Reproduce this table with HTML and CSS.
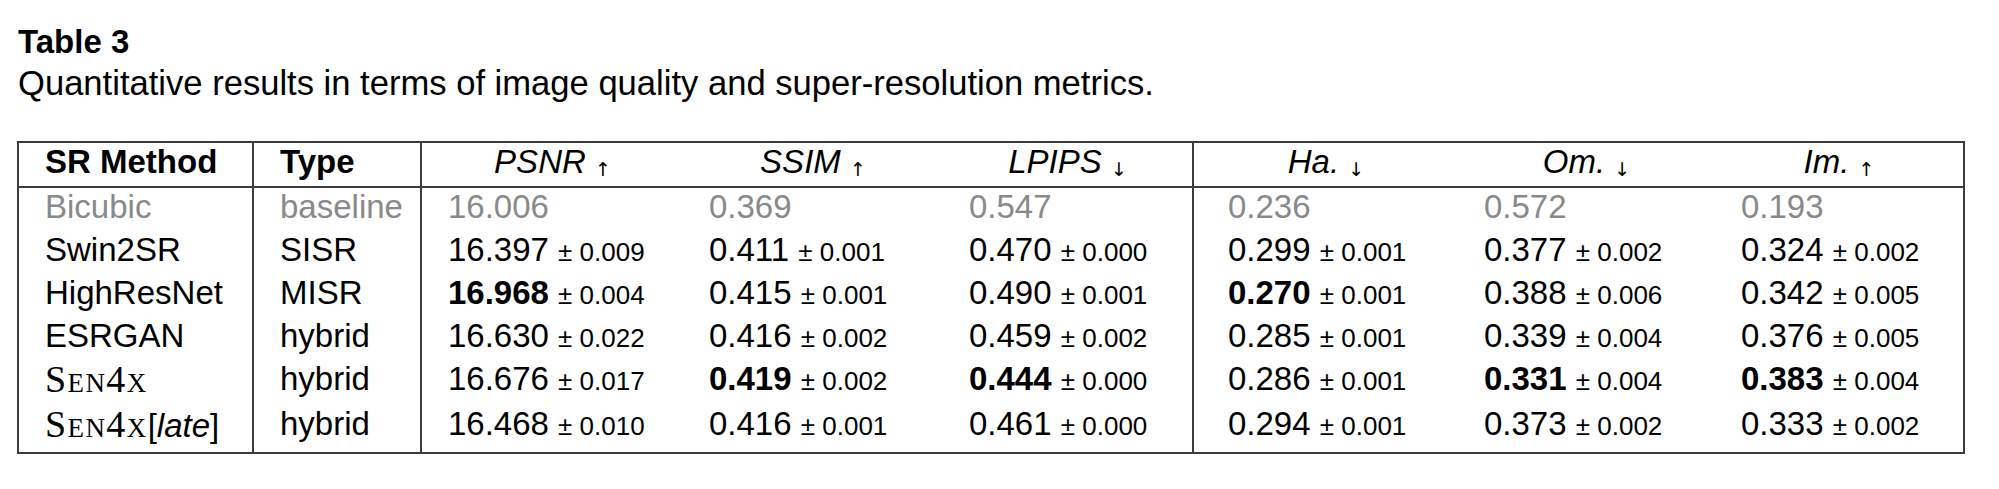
FILE: index.html
```html
<!DOCTYPE html>
<html lang="en">
<head>
<meta charset="utf-8">
<title>Table 3</title>
<link rel="stylesheet" href="styles.css">
</head>
<body>
<div class="page">
  <div class="title">Table 3</div>
  <div class="caption">Quantitative results in terms of image quality and super-resolution metrics.</div>
  <table class="results">
    <colgroup>
      <col class="c-method">
      <col class="c-type">
      <col class="c-psnr">
      <col class="c-ssim">
      <col class="c-lpips">
      <col class="c-ha">
      <col class="c-om">
      <col class="c-im">
    </colgroup>
    <thead>
      <tr>
        <th class="lead">SR Method</th>
        <th class="lead sep">Type</th>
        <th class="metric sep"><i>PSNR</i> <span class="arr">↑</span></th>
        <th class="metric"><i>SSIM</i> <span class="arr">↑</span></th>
        <th class="metric"><i>LPIPS</i> <span class="arr">↓</span></th>
        <th class="metric sep"><i>Ha.</i> <span class="arr">↓</span></th>
        <th class="metric"><i>Om.</i> <span class="arr">↓</span></th>
        <th class="metric"><i>Im.</i> <span class="arr">↑</span></th>
      </tr>
    </thead>
    <tbody>
      <tr class="base">
        <td>Bicubic</td>
        <td class="sep">baseline</td>
        <td class="sep">16.006</td>
        <td>0.369</td>
        <td>0.547</td>
        <td class="sep wide">0.236</td>
        <td>0.572</td>
        <td>0.193</td>
      </tr>
      <tr>
        <td>Swin2SR</td>
        <td class="sep">SISR</td>
        <td class="sep">16.397 <span class="pm">± 0.009</span></td>
        <td>0.411 <span class="pm">± 0.001</span></td>
        <td>0.470 <span class="pm">± 0.000</span></td>
        <td class="sep wide">0.299 <span class="pm">± 0.001</span></td>
        <td>0.377 <span class="pm">± 0.002</span></td>
        <td>0.324 <span class="pm">± 0.002</span></td>
      </tr>
      <tr>
        <td>HighResNet</td>
        <td class="sep">MISR</td>
        <td class="sep"><b>16.968</b> <span class="pm">± 0.004</span></td>
        <td>0.415 <span class="pm">± 0.001</span></td>
        <td>0.490 <span class="pm">± 0.001</span></td>
        <td class="sep wide"><b>0.270</b> <span class="pm">± 0.001</span></td>
        <td>0.388 <span class="pm">± 0.006</span></td>
        <td>0.342 <span class="pm">± 0.005</span></td>
      </tr>
      <tr>
        <td>ESRGAN</td>
        <td class="sep">hybrid</td>
        <td class="sep">16.630 <span class="pm">± 0.022</span></td>
        <td>0.416 <span class="pm">± 0.002</span></td>
        <td>0.459 <span class="pm">± 0.002</span></td>
        <td class="sep wide">0.285 <span class="pm">± 0.001</span></td>
        <td>0.339 <span class="pm">± 0.004</span></td>
        <td>0.376 <span class="pm">± 0.005</span></td>
      </tr>
      <tr>
        <td><span class="sc">Sen4x</span></td>
        <td class="sep">hybrid</td>
        <td class="sep">16.676 <span class="pm">± 0.017</span></td>
        <td><b>0.419</b> <span class="pm">± 0.002</span></td>
        <td><b>0.444</b> <span class="pm">± 0.000</span></td>
        <td class="sep wide">0.286 <span class="pm">± 0.001</span></td>
        <td><b>0.331</b> <span class="pm">± 0.004</span></td>
        <td><b>0.383</b> <span class="pm">± 0.004</span></td>
      </tr>
      <tr>
        <td><span class="sc">Sen4x</span>[<i>late</i>]</td>
        <td class="sep">hybrid</td>
        <td class="sep">16.468 <span class="pm">± 0.010</span></td>
        <td>0.416 <span class="pm">± 0.001</span></td>
        <td>0.461 <span class="pm">± 0.000</span></td>
        <td class="sep wide">0.294 <span class="pm">± 0.001</span></td>
        <td>0.373 <span class="pm">± 0.002</span></td>
        <td>0.333 <span class="pm">± 0.002</span></td>
      </tr>
    </tbody>
  </table>
</div>
</body>
</html>
```

FILE: styles.css
```css
html, body {
  margin: 0;
  padding: 0;
  background: #ffffff;
}

body {
  font-family: "Liberation Sans", Arial, sans-serif;
  color: #000000;
}

.page {
  padding: 22px 0 0 17px;
}

.title {
  font-weight: bold;
  font-size: 33px;
  line-height: 40px;
  padding-left: 1px;
}

.caption {
  font-size: 34.6px;
  line-height: 42px;
  padding-left: 1px;
}

.results {
  margin-top: 37px;
  width: 1946px;
  table-layout: fixed;
  border-collapse: collapse;
  border: 2px solid #3c3c3c;
  font-size: 33px;
}

.c-method { width: 235px; }
.c-type   { width: 168px; }
.c-psnr   { width: 262px; }
.c-ssim   { width: 260px; }
.c-lpips  { width: 250px; }
.c-ha     { width: 265px; }
.c-om     { width: 257px; }
.c-im     { width: 249px; }

.results th,
.results td {
  padding: 0 0 5px 26px;
  line-height: 38px;
  white-space: nowrap;
  text-align: left;
  vertical-align: top;
}

.results th {
  padding-bottom: 5px;
  border-bottom: 2px solid #3c3c3c;
}

.results tbody tr:last-child td {
  padding-bottom: 7px;
}

.results th.lead {
  font-weight: bold;
}

.results th.metric {
  font-weight: normal;
  text-align: center;
  padding-left: 0;
}

.results .sep {
  border-left: 2px solid #3c3c3c;
}

.results td.wide {
  padding-left: 34px;
}

.arr {
  font-family: "DejaVu Sans", sans-serif;
  font-size: 19px;
  font-style: normal;
  line-height: 1;
  position: relative;
  top: 3px;
}

.pm {
  font-size: 26px;
  line-height: 1;
}

.base td {
  color: #8a8a8a;
}

.sc {
  font-family: "Liberation Serif", "Times New Roman", serif;
  font-variant: small-caps;
  font-size: 38px;
  line-height: 1;
  letter-spacing: 1.4px;
}
```
